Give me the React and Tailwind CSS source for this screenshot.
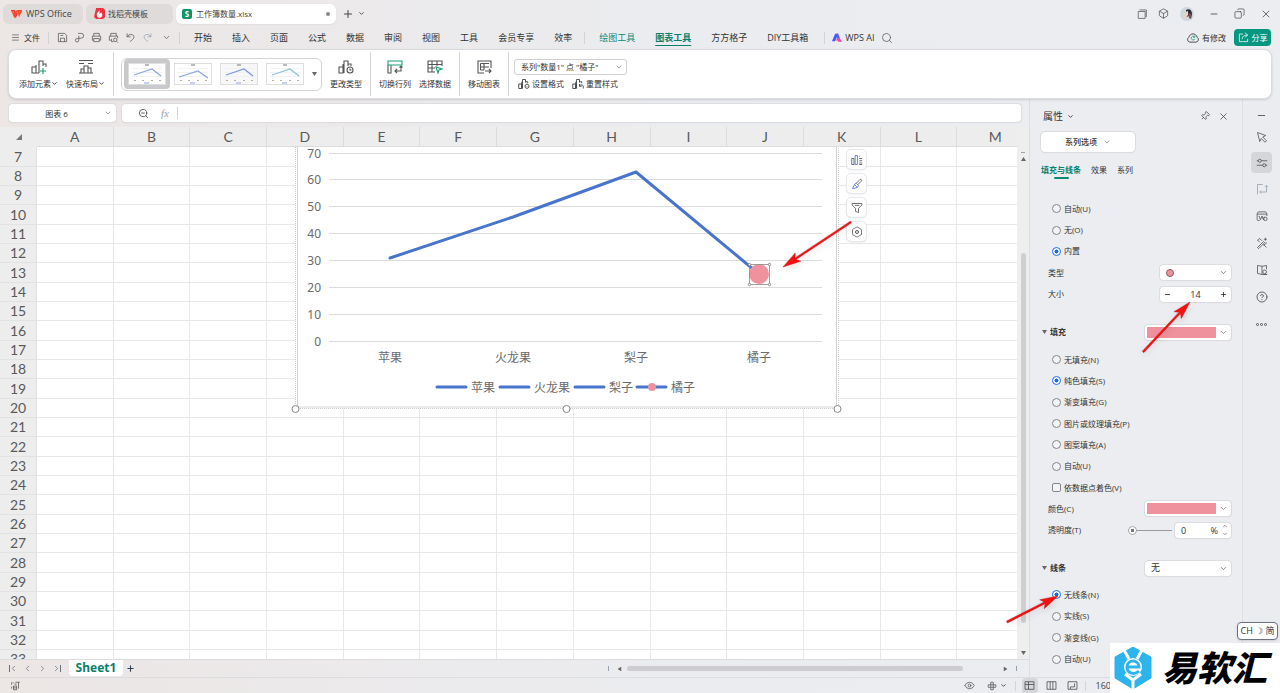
import {
  Box, ChevronDown, ChevronLeft, ChevronRight, CircleQuestionMark, Copy, Eye, Hexagon, Menu, Minus,
  Pin, Plus, Search, X, ZoomOut,
} from 'lucide-react';

const menus = ['开始', '插入', '页面', '公式', '数据', '审阅', '视图', '工具', '会员专享', '效率'];
const columns = ['A', 'B', 'C', 'D', 'E', 'F', 'G', 'H', 'I', 'J', 'K', 'L', 'M'];
const rows = Array.from({ length: 27 }, (_, i) => i + 7);

const axis = [
  { value: 70, y: 154 },
  { value: 60, y: 180 },
  { value: 50, y: 207 },
  { value: 40, y: 234 },
  { value: 30, y: 261 },
  { value: 20, y: 288 },
  { value: 10, y: 315 },
  { value: 0, y: 342 },
];
const categories = [
  { name: '苹果', x: 390 },
  { name: '火龙果', x: 513 },
  { name: '梨子', x: 636 },
  { name: '橘子', x: 759 },
];
const legend = [
  { name: '苹果', x: 436 },
  { name: '火龙果', x: 499 },
  { name: '梨子', x: 574 },
  { name: '橘子', x: 636 },
];

// Line icons that the icon package does not have, on a 16x16 grid
const glyphs = {
  save: <path d="M2 2h9l3 3v9H2zM5 14V9h6v5M5 5h4" />,
  output: <path d="M6 2h4.500a3.500 3.500 0 0 1 0 7H7M7 5.500V12a2.500 2.500 0 1 1-2.500-2.500H7" />,
  print: <path d="M4 6V2h8v4M4 12H2V6h12v6h-2M4 9.500h8V14H4z" />,
  preview: <path d="M4 6V2h8v4M4 12H2V6h12v3M5 10v4h3M10.500 9a2.500 2.500 0 1 1 0 5 2.500 2.500 0 0 1 0-5M12.500 13.500l2 2" />,
  undo: <path d="M3 2v5h5M3 7c3-5 10-4 10 0 0 3-3 5-6 7" />,
  redo: <path d="M13 2v5H8M13 7C10 2 3 3 3 7c0 3 3 5 6 7" />,
  addChart: (
    <>
      <path d="M1 8h4v6H1zM5 14V6M8 14V2h4v5M12 5h3v3M5 14h3" />
      <path d="M12 9v6M9 12h6" stroke="#1a9c78" />
    </>
  ),
  layout: <path d="M1 1.500h14M1 4.500h5M10 4.500h5M6 14V7h4v7M1 14h14M3 14v-4h3M10 9h3v5" />,
  changeType: <path d="M1 8h4v6H1zM5 14V5M6 14V2h4v5M10 5h3v2M12 8a3 3 0 1 1 0 6 3 3 0 0 1 0-6M12 9.500V11h1.500" />,
  swap: (
    <>
      <path d="M1 6v8h3V6M14 7v5H8M10 10l-2 2 2 2M12.500 8.500 14 7l1.500 1.500" />
      <path d="M1 2h14v4H1z" stroke="#1a9c78" />
    </>
  ),
  pick: (
    <>
      <path d="M8 13H1V2h14v5M1 5.500h14M1 9h7M5 2v11M10 2v5" />
      <path d="m9 8 6 2-3 1-1 3z" stroke="#1a9c78" />
    </>
  ),
  move: <path d="M8 14H2V2h13v7M4.500 4.500H13M4.500 8H13M4.500 11H8M4.500 4.500V11M8 4.500V11M9 12h6M13 10l2 2-2 2" />,
  format: <path d="M1 8h4v6H1zM5 14V5M6 14V2h4v4M10 5h3v2M12 8l2.500 1.500v3L12 14l-2.500-1.500v-3zM12 10.500v1" />,
  reset: <path d="M1 8h4v6H1zM5 14V5M6 14V2h4v4M10 5h3v2M10 8v3h3M10 11c1-3 5-2 5 0v3" />,
  cursor: <path d="m2 2 11 4-4 2 5 5-2 2-5-5-2 4z" />,
  sliders: <path d="M1 5h2M7 5h8M1 11h8M13 11h2M5 3a2 2 0 1 1 0 4 2 2 0 0 1 0-4M11 9a2 2 0 1 1 0 4 2 2 0 0 1 0-4" />,
  rotate: <path d="M2 15V2h7M14 3v9H5M12 5l2-2 1.500 2M7 10l-2 2 2 2" />,
  analyse: <path d="M5 14H3a1.500 1.500 0 0 1-1.500-1.500V5L3 2.500h10L14.500 5v3M1.500 5.500h13M4 8l2 5 2-5 2 5 1-4M12.500 9.500a2.300 2.300 0 1 1 0 4.600 2.300 2.300 0 0 1 0-4.600" />,
  tools: <path d="m2 14 8-8 1.500 1.500-8 8zM2 4l3-2 3 3M10 10l4 4M2 4l3 3M12.500 1v4M10.500 3h4M13.500 7v2M10 11l3-2" />,
  book: <path d="M8 3v11L2 12.500V2l6 1 6-1v5M14 14h-3M11.500 8a2.500 2.500 0 1 1 0 5 2.500 2.500 0 0 1 0-5M8 14h7" />,
  chartItems: (
    <>
      <path d="M1 6h3v8H1zM11 3h1M11 6h4M11 9h4M11 12h4M11 14h4" />
      <path d="M5.500 2h3v12h-3z" stroke="#4d6fd6" />
    </>
  ),
  brush: (
    <>
      <path d="m7 7 5-5c1-1 3 1 2 2L9 9" />
      <path d="M7 7 5 8l-3 6 6-1 2-3zM5 9l3 3" stroke="#4d6fd6" />
    </>
  ),
  funnel: <path d="M1.500 2h13v2L10 8.500V14l-4-1.500v-4L1.500 4zM5 4.500h6" />,
  cloud: (
    <>
      <path d="M4 13.500a3.500 3.500 0 0 1-1.500-6.500C4 1 12 1 13.500 7A3.500 3.500 0 0 1 12 13.500z" />
      <path d="M9.500 6a2.500 2.500 0 1 0 1 3M10.500 4.500v2.500H8" stroke="#1a9c78" />
    </>
  ),
  share: <path d="M7 3H2v11h12v-4M10 1l4 3.500L10 8M14 4.500c-5 0-8 1.500-8 6" />,
  macro: <path d="M1 2v4M3 2l2 2M7 2h7M12 2v10M4 8h5v6H4zM4 11h5M1 9v3M9 5h-3" />,
  cross: <path d="M6 6V2h4v4h4v4h-4v4H6v-4H2V6zM6 6h4v4H6z" />,
  tableView: <path d="M1.500 2.500h13v11h-13zM1.500 6.500h13M6.500 2.500v11" />,
  splitView: <path d="M1.500 2.500h13v11h-13zM6 2.500v11M10 2.500v11" />,
  pageView: <path d="M1.500 2.500h13v11h-13zM5 10h6V5M5 10v3" />,
  windows: <path d="M2 4h11v11H2zM4 1.500h11V13" />,
};

function Glyph({ name, className = 'size-3' }) {
  return (
    <svg viewBox="0 0 16 16" className={className} fill="none" stroke="currentColor" strokeWidth="1.1" aria-hidden="true">
      {glyphs[name]}
    </svg>
  );
}

function Caret() {
  return <ChevronDown size={7} strokeWidth={3} className="shrink-0" />;
}

function Triangle({ className = '' }) {
  return (
    <svg viewBox="0 0 10 8" className={`h-1 w-[5px] shrink-0 ${className}`} fill="#666" aria-hidden="true">
      <path d="M0 0h10L5 8z" />
    </svg>
  );
}

function Divider({ className = 'h-3' }) {
  return <span className={`w-px shrink-0 bg-[#d3d3d6] ${className}`} />;
}

function TitleBar() {
  return (
    <header className="flex h-[27px] shrink-0 items-center pr-2 pl-[3px] text-[#444]">
      <button className="flex h-5 w-20 items-center gap-1 rounded-md bg-[#dfdbdb] px-2 text-[9px]">
        <svg viewBox="0 0 16 12" className="h-[9px] w-[11px]" fill="none" strokeWidth="2.4">
          <path d="M0 2h5l2 8 2-5" stroke="#f0392b" />
          <path d="M2 3l3 7 3-7h3l1 5 3-6H9" stroke="#fb4b2e" />
        </svg>
        WPS Office
      </button>
      <button className="ml-[3px] flex h-5 w-[87px] items-center gap-[3px] rounded-md bg-[#dfdbdb] px-2 text-[8px]">
        <svg viewBox="0 0 16 16" className="size-[11px]">
          <path d="M3 0h10l3 3v10l-3 3H3l-3-3z" fill="#ee3340" />
          <path d="M8 2c0 3-4 4-4 8a4 4 0 0 0 8 0c0-2-1-3-2-4 0 2-3 2-2 5" fill="#fff" />
        </svg>
        找稻壳模板
      </button>
      <button className="ml-[3px] flex h-5 w-40 items-center gap-1 rounded-md bg-white px-[6px] text-[8px] shadow-xs">
        <span className="flex size-[10px] items-center justify-center rounded-xs bg-[#0d9467] text-[8px] font-bold text-white">S</span>
        工作簿数量.xlsx
        <span className="ml-auto size-1 rounded-full bg-[#888]" />
      </button>
      <button className="ml-[6px]" aria-label="新建"><Plus size={12} strokeWidth={2} /></button>
      <button className="ml-1" aria-label="标签列表"><Caret /></button>
      <div className="ml-auto flex items-center gap-[11px]">
        <button aria-label="窗口"><Glyph name="windows" className="size-[10px]" /></button>
        <button aria-label="应用"><Box size={11} strokeWidth={1.5} /></button>
        <svg viewBox="0 0 14 14" className="size-[14px]">
          <circle cx="7" cy="7" r="7" fill="#ccd8de" />
          <path d="M6 3c3-2 6 0 6 4l-1 5-2-3-3 1z" fill="#2d2c33" />
          <path d="M5 5l3-1v4l-3 4-2-1z" fill="#e7d3c9" />
          <path d="M8 6l3 1v5l-2-1z" fill="#7d4f55" />
        </svg>
        <button className="ml-1" aria-label="最小化"><Minus size={10} /></button>
        <button className="ml-1" aria-label="还原"><Copy size={11} strokeWidth={1.5} className="-scale-x-100" /></button>
        <button className="ml-1" aria-label="关闭"><X size={12} strokeWidth={1.5} /></button>
      </div>
    </header>
  );
}

function MenuBar() {
  return (
    <nav className="flex h-[22px] shrink-0 items-center pr-[9px] pb-px pl-[11px]">
      <button className="flex items-center gap-1 text-[8px]"><Menu size={9} strokeWidth={1.5} />文件</button>
      <Divider className="ml-2 h-3" />
      <div className="ml-2 flex items-center gap-[6px] text-[#555]">
        <button aria-label="保存"><Glyph name="save" className="size-[11px]" /></button>
        <button aria-label="输出"><Glyph name="output" className="size-[11px]" /></button>
        <button aria-label="打印"><Glyph name="print" className="size-[11px]" /></button>
        <button aria-label="打印预览"><Glyph name="preview" className="size-[11px]" /></button>
        <button aria-label="撤销"><Glyph name="undo" className="size-[11px]" /></button>
        <button aria-label="恢复" className="text-gray-400"><Glyph name="redo" className="size-[11px]" /></button>
        <button className="ml-[3px]" aria-label="更多"><ChevronDown size={9} strokeWidth={2} /></button>
      </div>
      <Divider className="ml-2 h-3" />
      <div className="ml-[14px] flex items-center gap-5 text-[9px] whitespace-nowrap">
        {menus.map((name) => <button key={name}>{name}</button>)}
      </div>
      <Divider className="ml-3 h-3" />
      <div className="ml-[14px] flex items-center gap-5 text-[9px] whitespace-nowrap">
        <button className="text-[#0e8a74]">绘图工具</button>
        <button className="font-bold text-[#0a7f6c] underline decoration-1 underline-offset-4">图表工具</button>
        <button>方方格子</button>
        <button>DIY工具箱</button>
      </div>
      <Divider className="ml-4 h-3" />
      <button className="ml-[7px] flex items-center gap-[3px] text-[9px] whitespace-nowrap">
        <svg viewBox="0 0 16 16" className="size-[10px]">
          <path d="M5 1h5L5 13H0z" fill="#3d5cf5" />
          <path d="M7 1h3l3 8H8z" fill="#6f51f2" />
          <path d="M8 9h5l3 5h-6l-1-2H6z" fill="#f0489b" />
        </svg>
        WPS AI
      </button>
      <button className="ml-[7px] text-[#555]" aria-label="搜索"><Search size={12} strokeWidth={1.5} /></button>
      <button className="ml-auto flex items-center gap-[3px] text-[8px]"><Glyph name="cloud" />有修改</button>
      <button className="ml-2 flex h-[17px] w-[37px] items-center justify-center gap-[3px] rounded bg-[#069781] text-[8px] text-white">
        <Glyph name="share" className="size-[11px]" />分享
      </button>
    </nav>
  );
}

function RibbonButton({ icon, label, caret }) {
  return (
    <button className="flex flex-col items-center gap-[3px] whitespace-nowrap">
      <Glyph name={icon} className="size-4 text-[#555]" />
      <span className="flex items-center leading-3">{label}{caret && <Caret />}</span>
    </button>
  );
}

function Thumbnail({ active, line = '#8ea6e0', fill = '#fff', points = '6,12 24,6 33,13' }) {
  return (
    <button className={`rounded-sm px-1 py-1 ${active ? 'bg-[#c9c9cb]' : ''}`} aria-label="图表样式">
      <svg viewBox="0 0 38 22" className="h-[22px] w-[38px]">
        <rect x=".5" y=".5" width="37" height="21" fill={fill} stroke="#dedede" />
        <path d="M4 5.500h30M4 9.500h30M4 13.500h30" stroke="#eeeef1" strokeWidth=".7" />
        <path d="M17 2h4" stroke="#777" />
        <polyline points={points} fill="none" stroke={line} strokeWidth="1.3" />
        <path d="M6 17.500h2M14 17.500h2M23 17.500h2M31 17.500h2" stroke="#b5b09c" />
        <path d="M16 20h5" stroke="#8ea6dc" />
      </svg>
    </button>
  );
}

function Ribbon() {
  return (
    <section className="z-10 mx-2 flex h-[50px] shrink-0 items-center rounded-lg border border-[#dcdce0] bg-white pl-[10px] text-[8px] shadow-sm">
      <div className="flex gap-2">
        <RibbonButton icon="addChart" label="添加元素" caret />
        <RibbonButton icon="layout" label="快速布局" caret />
      </div>
      <Divider className="ml-2 h-11" />
      <div className="ml-[7px] flex h-[33px] items-center rounded-md border border-[#d5d5d5] pl-[2px]">
        <Thumbnail active />
        <Thumbnail points="5,14 24,8 34,15" />
        <Thumbnail fill="#f7f7f8" line="#7c98dc" />
        <Thumbnail line="#8cc3dc" />
        <button className="px-1" aria-label="更多样式"><Triangle /></button>
      </div>
      <div className="ml-2"><RibbonButton icon="changeType" label="更改类型" /></div>
      <Divider className="ml-2 h-11" />
      <div className="ml-2 flex gap-2">
        <RibbonButton icon="swap" label="切换行列" />
        <RibbonButton icon="pick" label="选择数据" />
      </div>
      <Divider className="ml-2 h-11" />
      <div className="ml-2"><RibbonButton icon="move" label="移动图表" /></div>
      <Divider className="ml-2 h-11" />
      <div className="ml-[5px] flex flex-col gap-[3px]">
        <div className="relative flex items-center">
          <select className="h-4 w-[113px] appearance-none rounded-[3px] border border-[#d0d0d0] pl-[6px]" aria-label="图表元素">
            <option>系列"数量1" 点 "橘子"</option>
          </select>
          <ChevronDown size={8} className="pointer-events-none absolute right-1 text-gray-500" />
        </div>
        <div className="flex gap-2 pl-1">
          <button className="flex items-center gap-[2px]"><Glyph name="format" />设置格式</button>
          <button className="flex items-center gap-[2px]"><Glyph name="reset" />重置样式</button>
        </div>
      </div>
    </section>
  );
}

function FormulaBar() {
  return (
    <div className="flex h-7 shrink-0 items-center gap-[6px] pr-2 pl-[9px]">
      <div className="relative flex items-center">
        <input
          className="h-[18px] w-[107px] rounded-[3px] bg-white pr-3 text-center text-[8px] shadow-xs outline-1 outline-[#dddde0]"
          defaultValue="图表 6"
          aria-label="名称框"
        />
        <ChevronDown size={8} className="pointer-events-none absolute right-1 text-gray-500" />
      </div>
      <div className="flex h-[18px] flex-1 items-center rounded-[3px] bg-white pl-4 shadow-xs outline-1 outline-[#dddde0]">
        <button className="text-[#555]" aria-label="缩小"><ZoomOut size={11} strokeWidth={2} /></button>
        <button className="ml-3 font-['Liberation_Serif',serif] text-[11px] text-gray-400 italic">fx</button>
        <Divider className="ml-2 h-3" />
        <input className="h-4 min-w-0 flex-1 px-1 text-[9px] outline-none" aria-label="编辑栏" />
      </div>
    </div>
  );
}

function Arrow({ x1, y1, x2, y2 }) {
  const length = Math.hypot(x2 - x1, y2 - y1);
  const angle = (Math.atan2(y2 - y1, x2 - x1) * 180) / Math.PI;
  return (
    <g transform={`translate(${x1} ${y1}) rotate(${angle})`} fill="#fa0f0f" stroke="#b01515" strokeWidth=".4">
      <path d={`M0 -1 H${length - 15} L${length - 18} -5 L${length} 0 L${length - 18} 5 L${length - 15} 1 H0z`} />
    </g>
  );
}

function Chart() {
  return (
    <svg
      viewBox="288 147 568 269"
      className="pointer-events-none absolute top-5 left-72 h-[269px] w-[568px]"
      fontFamily='"Noto Sans", "Noto Sans CJK SC", sans-serif'
      fill="#6b6b6b"
      fontSize="12"
    >
      <path d="M295.500 147V408.500H838.500V147" fill="#fff" stroke="#ccc" strokeDasharray="1 1" />
      <path d="M297.500 147V407H836.500V147" fill="#fff" stroke="#d5d5d5" />
      {axis.map(({ value, y }) => (
        <g key={value}>
          <path d={`M329 ${y - 0.5}H822`} stroke="#dcdcdc" />
          <text x="321" y={y + 4} textAnchor="end">{value}</text>
        </g>
      ))}
      <polyline points="390,258 513,217 636,172 759,274" fill="none" stroke="#4874cb" strokeWidth="3" strokeLinecap="round" />
      {categories.map(({ name, x }) => (
        <text key={name} x={x} y="362" textAnchor="middle">{name}</text>
      ))}
      {legend.map(({ name, x }) => (
        <g key={name}>
          <path d={`M${x + 1} 387h29`} stroke="#4874cb" strokeWidth="3" strokeLinecap="round" />
          <text x={x + 35} y="392">{name}</text>
        </g>
      ))}
      <circle cx="652" cy="387" r="4" fill="#f0929d" />
      <circle cx="759" cy="274" r="10" fill="#f0929d" />
      <g fill="#fff" stroke="#888">
        <path d="M749.500 264.500h20v20h-20z" fill="none" strokeWidth=".8" />
        <circle cx="749.500" cy="264.500" r="1.200" />
        <circle cx="769.500" cy="264.500" r="1.200" />
        <circle cx="749.500" cy="284.500" r="1.200" />
        <circle cx="769.500" cy="284.500" r="1.200" />
        <circle cx="295.500" cy="409" r="3.500" />
        <circle cx="566.500" cy="409" r="3.500" />
        <circle cx="837.500" cy="409" r="3.500" />
      </g>
    </svg>
  );
}

function Sheet() {
  return (
    <div className="relative min-w-0 flex-1 overflow-hidden bg-white">
      <table className="w-[calc(100%+17px)] table-fixed border-separate border-spacing-0 font-['Lato','Noto_Sans',sans-serif] text-[14px] text-[#5a5a5a]">
        <thead>
          <tr className="h-5">
            <th className="w-[37px] bg-[#ededee] p-0" aria-label="全选">
              <span className="ml-4 block size-[6px] bg-[#777] [clip-path:polygon(100%_0,100%_100%,0_100%)]" />
            </th>
            {columns.map((name) => (
              <th key={name} className="border-r border-b border-[#dcdcdc] bg-[#ededee] p-0 pt-px leading-[18px] font-normal">{name}</th>
            ))}
          </tr>
        </thead>
        <tbody>
          {rows.map((row, i) => (
            <tr key={row} className={i % 3 === 0 ? 'h-5' : 'h-[19px]'}>
              <th className="border-r border-b border-[#e2e2e2] bg-[#ededee] p-0 leading-4 font-normal">{row}</th>
              {columns.map((name) => (
                <td key={name} className="border-r border-b border-[#e8e8e8] p-0" />
              ))}
            </tr>
          ))}
        </tbody>
      </table>
      <Chart />
      <div className="absolute top-[23px] left-[847px] flex flex-col gap-[5px] text-[#555]">
        {['chartItems', 'brush', 'funnel'].map((name) => (
          <button key={name} aria-label={name} className="flex size-[19px] items-center justify-center rounded bg-white shadow-sm outline-1 outline-gray-200">
            <Glyph name={name} />
          </button>
        ))}
        <button aria-label="设置" className="flex size-[19px] items-center justify-center rounded bg-white shadow-sm outline-1 outline-gray-200">
          <span className="relative flex items-center justify-center">
            <Hexagon size={12} strokeWidth={1.5} />
            <span className="absolute size-1 rounded-full border border-[#555]" />
          </span>
        </button>
      </div>
      <svg viewBox="770 210 90 70" className="pointer-events-none absolute top-[83px] left-[770px] h-[70px] w-[90px] drop-shadow-md">
        <Arrow x1={851} y1={222} x2={783} y2={267} />
      </svg>
    </div>
  );
}

function VerticalScrollbar() {
  return (
    <div className="flex w-3 shrink-0 flex-col items-center bg-[#eeeeef] pt-5">
      <span className="mt-[5px] h-px w-1 bg-gray-400" />
      <button aria-label="向上" className="flex h-3 items-center"><Triangle className="rotate-180" /></button>
      <div className="flex w-[5px] flex-1 flex-col pt-[88px] pb-6">
        <span className="flex-1 rounded-full bg-[#cfcfd3]" />
      </div>
      <button aria-label="向下" className="flex h-3 items-center"><Triangle /></button>
    </div>
  );
}

function SheetTabs() {
  return (
    <div className="flex h-[18px] shrink-0 items-center border-t border-[#dcdcdf] pl-[9px] text-gray-500">
      <div className="flex items-center gap-1">
        <button className="flex items-center" aria-label="第一张"><span className="h-[7px] w-px bg-gray-500" /><ChevronLeft size={9} className="-ml-px" /></button>
        <button className="ml-px" aria-label="上一张"><ChevronLeft size={9} /></button>
        <button className="ml-[2px]" aria-label="下一张"><ChevronRight size={9} /></button>
        <button className="ml-px flex items-center" aria-label="最后一张"><ChevronRight size={9} className="-mr-px" /><span className="h-[7px] w-px bg-gray-500" /></button>
      </div>
      <button className="ml-2 h-4 w-[54px] self-start rounded-b bg-white font-['Noto_Sans',sans-serif] text-[12px] leading-4 font-bold text-[#0a7f6c]">Sheet1</button>
      <button className="ml-[3px] text-gray-700" aria-label="添加工作表"><Plus size={9} strokeWidth={3} /></button>
      <div className="ml-auto flex w-[409px] items-center">
        <Divider className="h-[5px] bg-gray-400" />
        <button className="ml-2" aria-label="向左"><Triangle className="rotate-90" /></button>
        <span className="mr-10 ml-[5px] h-[5px] flex-1 rounded-full bg-[#cdcdcf]" />
        <button aria-label="向右"><Triangle className="-rotate-90" /></button>
        <Divider className="ml-2 h-[5px] bg-gray-400" />
      </div>
      <span className="w-3" />
    </div>
  );
}

function Option({ group, label, checked }) {
  return (
    <label className="flex items-center gap-[3px] pl-[6px]">
      <input
        type="radio"
        name={group}
        defaultChecked={checked}
        className="size-[9px] appearance-none rounded-full border border-[#85858a] bg-white/40 checked:border-[#1a6cf0] checked:bg-[radial-gradient(#1a6cf0_38%,white_44%)]"
      />
      {label}
    </label>
  );
}

function Field({ id, label, children }) {
  return (
    <div className="flex items-center justify-between pl-[2px]">
      <label htmlFor={id}>{label}</label>
      {children}
    </div>
  );
}

function ColorSelect({ id }) {
  return (
    <div className="relative flex w-[86px] items-center">
      <select id={id} aria-label="颜色" className="h-[15px] w-full appearance-none rounded-[3px] bg-white shadow-xs outline-1 outline-[#dcdce0]">
        <option />
      </select>
      <span className="pointer-events-none absolute left-[2px] h-[11px] w-[69px] bg-[#f0929d]" />
      <ChevronDown size={9} className="pointer-events-none absolute right-[3px] text-gray-500" />
    </div>
  );
}

function PropertiesPanel() {
  return (
    <aside className="relative flex w-[214px] shrink-0 flex-col border-r border-l border-[#dddee3] bg-[#ebedf1] text-[8px]">
      <div className="flex min-h-0 flex-1 flex-col overflow-hidden pr-[11px] pl-[11px]">
        <div className="mt-[9px] flex h-4 shrink-0 items-center text-[10px]">
          <button className="flex items-center gap-1 pl-[2px]">属性 <Caret /></button>
          <button className="ml-auto" aria-label="固定"><Pin size={10} strokeWidth={1.5} className="rotate-45" /></button>
          <button className="mr-[2px] ml-2" aria-label="关闭"><X size={11} strokeWidth={1.5} /></button>
        </div>
        <button className="mt-2 flex h-5 w-[94px] shrink-0 items-center justify-center gap-[6px] rounded bg-white font-medium shadow-xs outline-1 outline-[#dcdce0]">
          系列选项 <ChevronDown size={8} className="text-gray-500" />
        </button>
        <div className="mt-3 flex h-4 shrink-0 items-start gap-[10px]">
          <button className="flex flex-col items-center gap-px font-bold text-[#0a7f6c]">
            填充与线条
            <span className="h-[2px] w-[15px] rounded-full bg-[#0a8b76]" />
          </button>
          <button>效果</button>
          <button>系列</button>
        </div>
        <div className="mt-[18px] grid h-[107px] shrink-0 auto-rows-fr pl-[5px]">
          <Option group="marker" label="自动(U)" />
          <Option group="marker" label="无(O)" />
          <Option group="marker" label="内置" checked />
          <Field id="marker-type" label="类型">
            <div className="relative flex w-[71px] items-center">
              <select id="marker-type" className="h-[15px] w-full appearance-none rounded-[3px] bg-white shadow-xs outline-1 outline-[#dcdce0]">
                <option />
              </select>
              <span className="pointer-events-none absolute left-[6px] size-2 rounded-full border border-[#8c5a60] bg-[#f0929d]" />
              <ChevronDown size={9} className="pointer-events-none absolute right-[3px] text-gray-500" />
            </div>
          </Field>
          <Field id="marker-size" label="大小">
            <div className="flex h-[15px] w-[71px] items-center rounded-[3px] bg-white px-1 shadow-xs outline-1 outline-[#dcdce0]">
              <button aria-label="减小"><Minus size={7} strokeWidth={3} /></button>
              <input id="marker-size" className="min-w-0 flex-1 text-center text-[9px] outline-none" defaultValue="14" />
              <button aria-label="增大"><Plus size={7} strokeWidth={3} /></button>
            </div>
          </Field>
        </div>
        <div className="mt-[19px] flex h-4 shrink-0 items-center justify-between">
          <button className="flex items-center gap-[3px] pl-px font-bold"><Triangle />填充</button>
          <ColorSelect id="fill-preview" />
        </div>
        <div className="mt-[9px] grid h-48 shrink-0 auto-rows-fr pl-[5px]">
          <Option group="fill" label="无填充(N)" />
          <Option group="fill" label="纯色填充(S)" checked />
          <Option group="fill" label="渐变填充(G)" />
          <Option group="fill" label="图片或纹理填充(P)" />
          <Option group="fill" label="图案填充(A)" />
          <Option group="fill" label="自动(U)" />
          <label className="flex items-center gap-[3px] pl-[6px]">
            <input type="checkbox" className="size-[9px] appearance-none rounded-xs border border-[#85858a] bg-white/40" />
            依数据点着色(V)
          </label>
          <Field id="fill-color" label="颜色(C)"><ColorSelect id="fill-color" /></Field>
          <Field id="opacity" label="透明度(T)">
            <div className="flex items-center gap-[3px]">
              <input
                id="opacity"
                type="range"
                defaultValue="0"
                className="h-[9px] w-11 appearance-none bg-[linear-gradient(#999,#999)] bg-[length:100%_1px] bg-center bg-no-repeat [&::-webkit-slider-thumb]:size-[9px] [&::-webkit-slider-thumb]:appearance-none [&::-webkit-slider-thumb]:rounded-full [&::-webkit-slider-thumb]:border [&::-webkit-slider-thumb]:border-[#aaa] [&::-webkit-slider-thumb]:bg-[radial-gradient(#777_30%,white_36%)]"
              />
              <div className="flex h-[15px] w-14 items-center rounded-[3px] bg-white pr-[3px] pl-[6px] shadow-xs outline-1 outline-[#dcdce0]">
                <input className="min-w-0 flex-1 text-[9px] outline-none" defaultValue="0" aria-label="透明度数值" />
                <span className="text-[9px]">%</span>
                <span className="ml-1 flex flex-col gap-[2px]">
                  <ChevronDown size={6} className="rotate-180" />
                  <ChevronDown size={6} />
                </span>
              </div>
            </div>
          </Field>
        </div>
        <div className="mt-[19px] flex h-4 shrink-0 items-center justify-between">
          <button className="flex items-center gap-[3px] pl-px font-bold"><Triangle />线条</button>
          <div className="relative flex w-[86px] items-center">
            <select className="h-[15px] w-full appearance-none rounded-[3px] bg-white pl-[6px] text-[9px] shadow-xs outline-1 outline-[#dcdce0]" aria-label="线条">
              <option>无</option>
            </select>
            <ChevronDown size={9} className="pointer-events-none absolute right-[3px] text-gray-500" />
          </div>
        </div>
        <div className="mt-2 grid h-[86px] shrink-0 auto-rows-fr pl-[5px]">
          <Option group="line" label="无线条(N)" checked />
          <Option group="line" label="实线(S)" />
          <Option group="line" label="渐变线(G)" />
          <Option group="line" label="自动(U)" />
        </div>
      </div>
      <svg viewBox="1000 280 200 350" className="pointer-events-none absolute top-[181px] left-[-30px] h-[350px] w-[200px] drop-shadow-md">
        <Arrow x1={1143} y1={352} x2={1190} y2={302} />
        <Arrow x1={1007} y1={622} x2={1058} y2={596} />
      </svg>
    </aside>
  );
}

function SideBar() {
  return (
    <div className="flex w-[37px] shrink-0 flex-col items-center bg-[#ebecf0] pt-[11px] text-[#555]">
      <button className="flex h-[11px] items-center" aria-label="收起"><Minus size={11} strokeWidth={2} /></button>
      <button className="mt-[10px]" aria-label="选择"><Glyph name="cursor" /></button>
      <button className="mt-[9px] flex size-[21px] items-center justify-center rounded bg-[#d5d6da]" aria-label="属性"><Glyph name="sliders" /></button>
      <div className="mt-[10px] flex flex-col items-center gap-[15px]">
        <button className="text-gray-400" aria-label="旋转"><Glyph name="rotate" /></button>
        <button aria-label="分析"><Glyph name="analyse" /></button>
        <button aria-label="工具"><Glyph name="tools" /></button>
        <button aria-label="文档"><Glyph name="book" /></button>
        <button aria-label="帮助"><CircleQuestionMark size={12} strokeWidth={1.75} /></button>
        <button aria-label="更多" className="flex h-3 items-center gap-px">
          <span className="size-[3px] rounded-full border border-[#555]" />
          <span className="size-[3px] rounded-full border border-[#555]" />
          <span className="size-[3px] rounded-full border border-[#555]" />
        </button>
      </div>
    </div>
  );
}

function StatusBar() {
  return (
    <footer className="flex h-4 shrink-0 items-center border-t border-[#dcdde0] pr-[169px] pl-[11px] text-[9px] text-[#444]">
      <Glyph name="macro" className="size-[10px]" />
      <button className="ml-auto" aria-label="护眼"><Eye size={11} strokeWidth={1.5} /></button>
      <button className="ml-3 flex items-center gap-[3px]" aria-label="阅读"><Glyph name="cross" className="size-[10px]" /><Caret /></button>
      <Divider className="ml-2 h-[10px]" />
      <button className="ml-[6px] flex size-4 items-center justify-center rounded-sm bg-[#d6d7da]" aria-label="普通视图"><Glyph name="tableView" className="size-[11px]" /></button>
      <button className="ml-2" aria-label="页面布局"><Glyph name="splitView" className="size-[11px]" /></button>
      <button className="ml-[10px]" aria-label="分页预览"><Glyph name="pageView" className="size-[11px]" /></button>
      <Divider className="ml-[7px] h-[10px]" />
      <span className="ml-[10px] leading-3">160</span>
    </footer>
  );
}

function Brand() {
  return (
    <div className="absolute right-0 bottom-0 z-20 flex h-[50px] w-[170px] items-center gap-[10px] bg-white pl-1">
      <svg viewBox="0 0 38 42" className="h-[42px] w-[38px]">
        <path d="M19 0 37 10v21L19 42 1 31V10z" fill="#2eb4ec" stroke="#2eb4ec" strokeLinejoin="round" />
        <path d="M10 3l5 9M28 3l-5 9M11 27l8 6 8-6M19 33v9" fill="none" stroke="#fff" strokeWidth="3" />
        <circle cx="19" cy="20" r="9" fill="#fff" />
        <path d="M12 20h13c0-8-12-8-12 0 0 7 8 8 12 4" fill="none" stroke="#2eb4ec" strokeWidth="3" />
      </svg>
      <span className="text-[35px] leading-10 font-black whitespace-nowrap text-black italic">易软汇</span>
    </div>
  );
}

export default function App() {
  return (
    <div className="relative flex h-screen flex-col overflow-hidden bg-linear-to-r from-[#ece6e5] via-[#ebecef] to-[#ebedf1] font-['Open_Sans','Noto_Sans_CJK_SC',sans-serif] text-[#333]">
      <TitleBar />
      <MenuBar />
      <Ribbon />
      <div className="flex min-h-0 flex-1">
        <main className="flex min-w-0 flex-1 flex-col">
          <FormulaBar />
          <div className="flex min-h-0 flex-1">
            <Sheet />
            <VerticalScrollbar />
          </div>
          <SheetTabs />
        </main>
        <PropertiesPanel />
        <SideBar />
      </div>
      <StatusBar />
      <div className="absolute right-[2px] bottom-[53px] z-20 flex h-[18px] w-[41px] items-center justify-center rounded border border-gray-500 bg-white text-[9px] whitespace-nowrap shadow-sm">
        CH ☽ 简
      </div>
      <Brand />
    </div>
  );
}
